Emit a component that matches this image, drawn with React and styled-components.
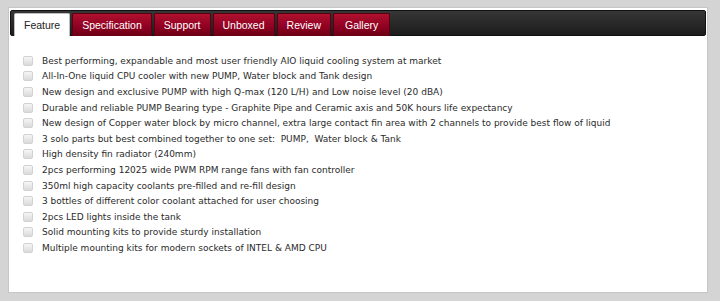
import React, { useState } from 'react';
import styled, { createGlobalStyle } from 'styled-components';

const GlobalStyle = createGlobalStyle`
  html, body {
    margin: 0;
    padding: 0;
    background: #d4d4d4;
  }
`;

const Page = styled.div`
  padding: 7px 12px 8px 8px;
  height: 301px;
  box-sizing: border-box;
`;

const Panel = styled.div`
  width: 700px;
  height: 286px;
  box-sizing: border-box;
  background: #fff;
  border: 1px solid #c6c6c6;
  padding: 2px 1px;
`;

const TabBar = styled.div`
  display: flex;
  align-items: flex-end;
  gap: 2px;
  height: 26px;
  box-sizing: border-box;
  padding: 0 3px;
  background: linear-gradient(#363636, #1c1c1c);
  border: 1px solid #111;
  border-radius: 2px;
`;

const Tab = styled.button`
  height: 23px;
  box-sizing: border-box;
  padding: 0 ${(p) => p.$pad}px;
  margin-bottom: -1px;
  border: 1px solid ${(p) => (p.$active ? '#bdbdbd' : '#5a0010')};
  border-bottom: none;
  border-radius: 2px 2px 0 0;
  background: ${(p) =>
    p.$active ? '#fff' : 'linear-gradient(#b0102e, #8e0022 60%, #6c0014)'};
  color: ${(p) => (p.$active ? '#222' : '#fff')};
  font-family: 'Liberation Sans', Arial, sans-serif;
  font-size: 10.5px;
  cursor: pointer;
`;

const List = styled.ul`
  list-style: none;
  margin: 0;
  padding: 17px 0 0 13px;
`;

const Item = styled.li`
  display: flex;
  align-items: center;
  gap: 9px;
  height: 15.6px;
  font-family: 'DejaVu Sans', 'Lucida Grande', sans-serif;
  font-size: 9px;
  color: #2a2a2a;
  white-space: pre;
`;

const Bullet = styled.span`
  width: 10px;
  height: 10px;
  box-sizing: border-box;
  flex-shrink: 0;
  border: 1px solid #d2d2d2;
  border-radius: 2px;
  background: linear-gradient(#f6f6f6, #dadada);
`;

const tabs = [
  { label: 'Feature', pad: 9 },
  { label: 'Specification', pad: 9 },
  { label: 'Support', pad: 9 },
  { label: 'Unboxed', pad: 9 },
  { label: 'Review', pad: 9 },
  { label: 'Gallery', pad: 11 },
];

const features = [
  'Best performing, expandable and most user friendly AIO liquid cooling system at market',
  'All-In-One liquid CPU cooler with new PUMP, Water block and Tank design',
  'New design and exclusive PUMP with high Q-max (120 L/H) and Low noise level (20 dBA)',
  'Durable and reliable PUMP Bearing type - Graphite Pipe and Ceramic axis and 50K hours life expectancy',
  'New design of Copper water block by micro channel, extra large contact fin area with 2 channels to provide best flow of liquid',
  '3 solo parts but best combined together to one set:  PUMP,  Water block & Tank',
  'High density fin radiator (240mm)',
  '2pcs performing 12025 wide PWM RPM range fans with fan controller',
  '350ml high capacity coolants pre-filled and re-fill design',
  '3 bottles of different color coolant attached for user choosing',
  '2pcs LED lights inside the tank',
  'Solid mounting kits to provide sturdy installation',
  'Multiple mounting kits for modern sockets of INTEL & AMD CPU',
];

export default function App() {
  const [active, setActive] = useState('Feature');
  return (
    <>
      <GlobalStyle />
      <Page>
        <Panel>
          <TabBar>
            {tabs.map((t) => (
              <Tab
                key={t.label}
                $pad={t.pad}
                $active={active === t.label}
                onClick={() => setActive(t.label)}
              >
                {t.label}
              </Tab>
            ))}
          </TabBar>
          <List>
            {features.map((f) => (
              <Item key={f}>
                <Bullet />
                {f}
              </Item>
            ))}
          </List>
        </Panel>
      </Page>
    </>
  );
}
